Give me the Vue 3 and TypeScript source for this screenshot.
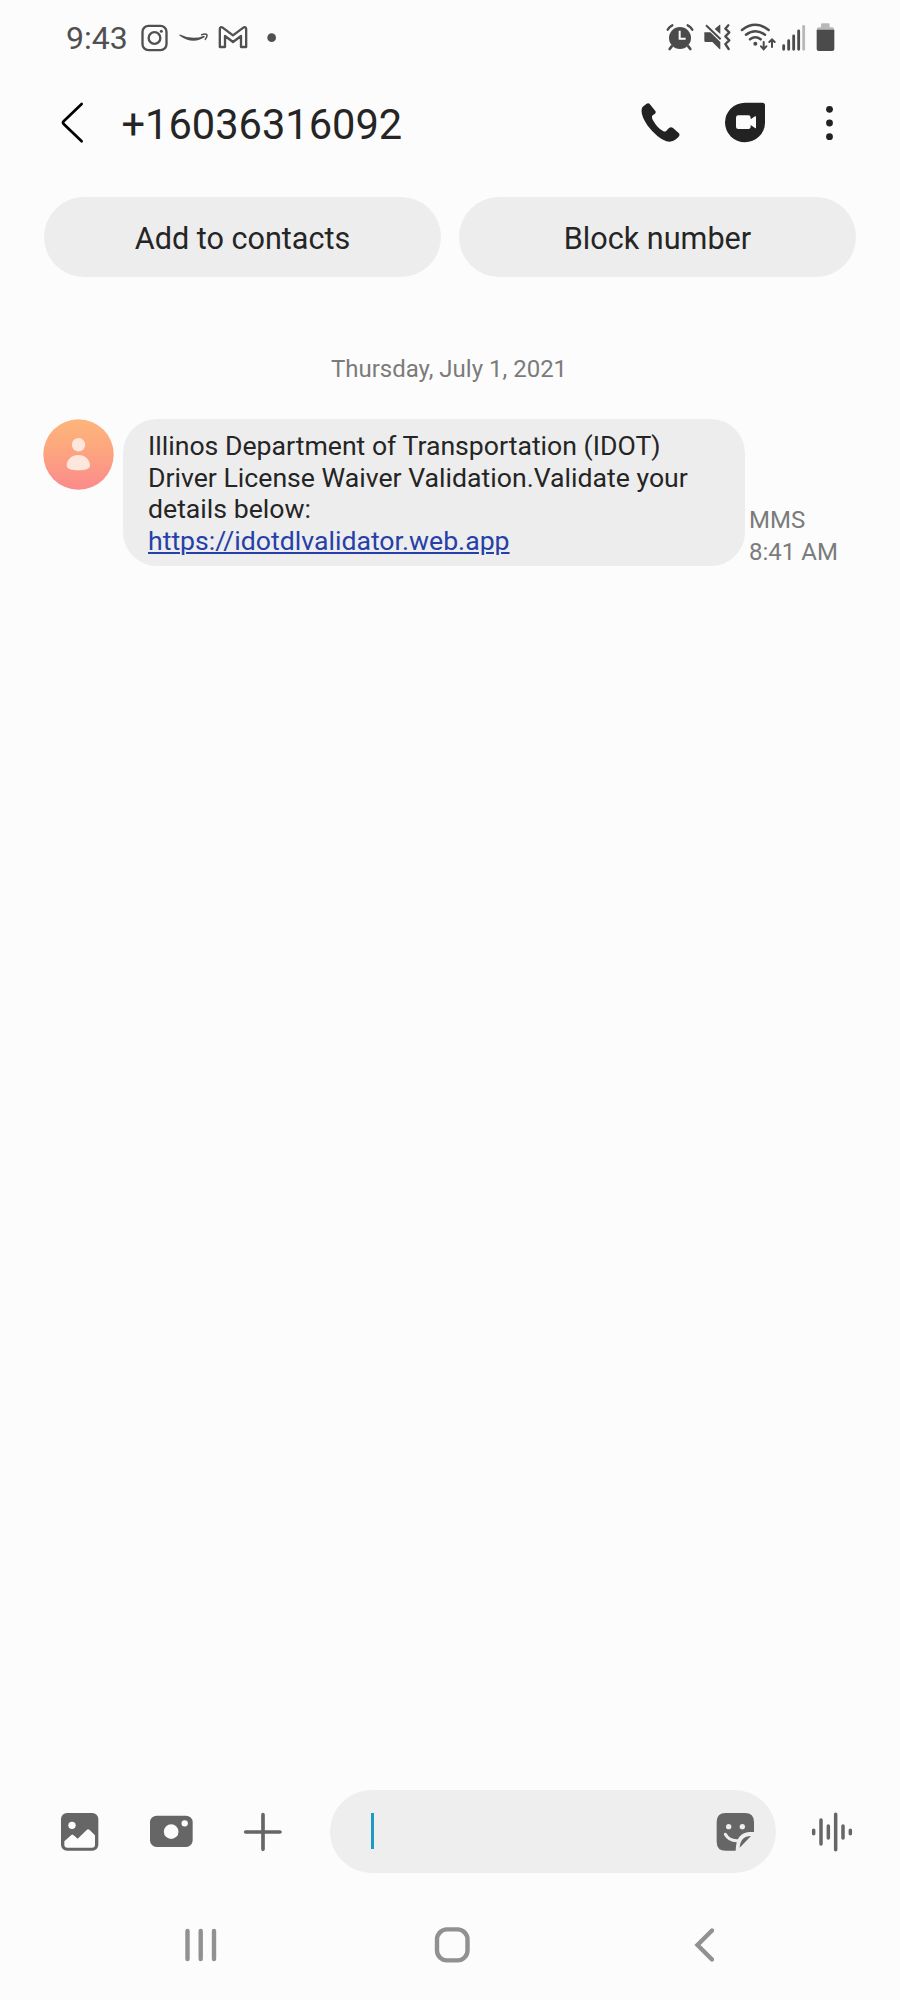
<script setup lang="ts">
import { ref } from 'vue'

const sender = ref('+16036316092')
const actions: string[] = ['Add to contacts', 'Block number']
const lines: string[] = [
  'Illinos Department of Transportation (IDOT)',
  'Driver License Waiver Validation.Validate your',
  'details below:',
]
const link = 'https://idotdlvalidator.web.app'
</script>

<template>
  <div class="phone">
    <div class="status">
      <span class="clock">9:43</span>
      <svg class="s-insta" width="30" height="30" viewBox="270 39 90 90" fill="none" stroke="#505050">
        <rect x="277.500" y="47.500" width="72" height="73" rx="18" stroke-width="7" />
        <circle cx="313.500" cy="84" r="17.500" stroke-width="7" />
        <circle cx="334" cy="63.500" r="4.500" fill="#505050" stroke="none" />
      </svg>
      <svg class="s-smile" width="32" height="30" viewBox="384 39 96 90">
        <path d="M388 73Q426 92 462 77L465 81Q428 105 389 77Z" fill="#505050" />
        <path d="M455 74Q468 70 471 75Q472 81 466 88" fill="none" stroke="#505050" stroke-width="4.500" stroke-linecap="round" />
      </svg>
      <svg class="s-mail" width="32" height="30" viewBox="501 39 96 90" fill="none" stroke="#505050" stroke-width="7" stroke-linejoin="round">
        <path d="M509.500 111V57Q510 49 518 53L549 76L580 53Q588 49 588.500 57V111H573V78L549 96L525 78V111Z" />
      </svg>
      <svg class="s-dot" width="13" height="30" viewBox="645 39 39 90"><circle cx="665" cy="83" r="13" fill="#505050" /></svg>
      <span class="fill" />
      <svg width="30" height="30" viewBox="45 39 90 90">
        <circle cx="90" cy="84" r="33" fill="#4b4b4b" />
        <path d="M65 109L59 117M115 109L121 117" stroke="#4b4b4b" stroke-width="8" stroke-linecap="round" />
        <path d="M53 59Q58 50 67 46M127 59Q122 50 113 46" fill="none" stroke="#4b4b4b" stroke-width="7" stroke-linecap="round" />
        <path d="M89 62V86H107" fill="none" stroke="#fcfcfc" stroke-width="6" />
      </svg>
      <svg class="s-mute" width="30" height="30" viewBox="159 39 90 90">
        <path d="M163 67H181L211 96V118H209L187 96H167Q163 96 163 92ZM194 57L209 44H211V72Z" fill="#4b4b4b" />
        <path d="M168 46L212 88" stroke="#4b4b4b" stroke-width="6" />
        <path d="M235 46L226 56L238 67L226 79L238 91L226 102L236 117" fill="none" stroke="#4b4b4b" stroke-width="7" stroke-linejoin="round" stroke-linecap="round" />
      </svg>
      <svg class="s-wifi" width="37" height="30" viewBox="270 39 111 90">
        <g fill="none" stroke="#4b4b4b" stroke-width="7.500" stroke-linecap="round">
          <path d="M276 60Q316 29 356 60M288 74Q316 53 345 74M300 88Q316 75 332 88" />
          <path d="M341 96V117M333 109L341 118L349 109M366 111V89M358 96L366 88L374 96" stroke-width="6" />
        </g>
        <circle cx="316" cy="101" r="6" fill="#4b4b4b" />
      </svg>
      <svg class="s-signal" width="26" height="30" viewBox="393 39 78 90" fill="none" stroke="#4b4b4b" stroke-width="8.500" stroke-linecap="round">
        <path d="M401 107V118M416 92V118M431 78V118M446 63V118" />
        <path d="M461 49V118" stroke="#b8b8b8" />
      </svg>
      <svg class="s-battery" width="21" height="30" viewBox="495 39 63 90">
        <path d="M501 62V57Q501 52 506 52H513V44Q513 40 517 40H535Q539 40 539 44V52H547Q552 52 552 57V62Z" fill="#b8b8b8" />
        <path d="M500 59H553V117Q553 123 547 123H506Q500 123 500 117Z" fill="#4b4b4b" />
      </svg>
    </div>

    <header class="bar">
      <svg class="back" width="25" height="46" viewBox="60 60 75 138" fill="none" stroke="#000" stroke-width="8" stroke-linecap="round" stroke-linejoin="round">
        <path d="M125 72L71 124Q67 128 71 132L125 184" />
      </svg>
      <h1>{{ sender }}</h1>
      <span class="fill" />
      <svg width="42" height="46" viewBox="60 60 126 138">
        <path d="M72 77L80 71Q86 68 91 74L106 93Q109 98 104 102L98 106Q94 110 98 119Q112 144 129 153Q135 157 139 152L147 144Q153 140 159 144L176 159Q181 164 176 170L168 178Q156 188 139 184Q111 173 83 137Q58 101 67 82Q69 79 72 77Z" fill="#222" />
      </svg>
      <svg class="duo" width="42" height="46" viewBox="312 60 126 138">
        <path d="M375 68H427Q435 68 435 76V128A60 59.500 0 1 1 375 68Z" fill="#222" />
        <path d="M355 106H385Q392 106 392 113V118L405 109Q408 108 408 111V143Q408 146 405 144L392 135V141Q392 147 385 147H355Q348 147 348 141V113Q348 106 355 106Z" fill="#fcfcfc" />
      </svg>
      <svg class="more" width="11" height="46" viewBox="612 60 33 138" fill="#222">
        <circle cx="628.500" cy="88" r="10.200" /><circle cx="628.500" cy="129" r="10.200" /><circle cx="628.500" cy="170" r="10.200" />
      </svg>
    </header>

    <div class="actions">
      <button v-for="a in actions" :key="a" type="button">{{ a }}</button>
    </div>

    <main>
      <p class="date">Thursday, July 1, 2021</p>
      <div class="message">
        <svg class="avatar" width="71" height="71" viewBox="0 0 71 71">
          <defs>
            <linearGradient id="avatar-fill" x1="0" y1="0" x2="0" y2="1">
              <stop offset="0" stop-color="#fdb57a" /><stop offset="0.400" stop-color="#fda77e" /><stop offset="1" stop-color="#fb8a8c" />
            </linearGradient>
          </defs>
          <circle cx="35.500" cy="35.500" r="35.200" fill="url(#avatar-fill)" />
          <circle cx="35.500" cy="25.700" r="6.700" fill="#fde7dd" />
          <path d="M35.300 36C42 36 47 41 47 46.500C47 50 42 51.300 35.300 51.300S23.700 50 23.700 46.500C23.700 41 28.500 36 35.300 36Z" fill="#fde7dd" />
        </svg>
        <div class="bubble">
          <div v-for="l in lines" :key="l" class="line">{{ l }}</div>
          <a class="line">{{ link }}</a>
        </div>
        <div class="meta">MMS<br>8:41 AM</div>
      </div>
    </main>

    <footer class="compose">
      <svg width="40" height="83" viewBox="60 30 120 249">
        <rect x="63" y="99" width="112" height="113" rx="18" fill="#666" />
        <circle cx="96" cy="136" r="11" fill="#fcfcfc" />
        <path d="M73 184L94 165Q97 162 101 166L113 176L140 150Q144 146 149 150L165 166V194Q165 203 156 203H82Q73 203 73 194Z" fill="#fcfcfc" />
      </svg>
      <svg class="camera" width="45" height="83" viewBox="327 30 135 249">
        <rect x="330" y="107" width="128" height="94" rx="20" fill="#666" />
        <circle cx="393.500" cy="155" r="22" fill="#fcfcfc" /><circle cx="434" cy="130" r="9.500" fill="#fcfcfc" />
      </svg>
      <svg class="plus" width="40" height="83" viewBox="609 30 120 249" stroke="#666" stroke-width="11" stroke-linecap="round">
        <path d="M617 156H720M669 104V208" />
      </svg>
      <div class="input">
        <span class="caret" />
        <svg width="39" height="83" viewBox="228 30 117 249">
          <path d="M257 99H315Q342 99 342 126V156H328Q288 158 287 212H257Q230 212 230 185V126Q230 99 257 99Z" fill="#666" />
          <path d="M299 203Q301 169 333 168Z" fill="#666" />
          <circle cx="266" cy="140" r="8" fill="#eee" /><circle cx="307" cy="140" r="8" fill="#eee" />
          <path d="M256 163Q267 183 292 182" fill="none" stroke="#eee" stroke-width="9" stroke-linecap="round" />
        </svg>
      </div>
      <svg class="voice" width="42" height="83" viewBox="513 30 126 249" stroke="#666" stroke-width="10.500" stroke-linecap="round">
        <path d="M521 151V161M543 120V192M565 138V174M587 103V209M609 138V174M631 151V161" />
      </svg>
    </footer>

    <nav>
      <svg width="34" height="42" viewBox="0 0 34 42" stroke="#919191" stroke-width="4.400" stroke-linecap="round"><path d="M3.500 7V35M16.700 7V35M30 7V35" /></svg>
      <svg class="home" width="36" height="42" viewBox="0 0 36 42" fill="none" stroke="#919191" stroke-width="4.400"><rect x="3" y="5.400" width="30.500" height="31" rx="10" /></svg>
      <svg class="nav-back" width="22" height="42" viewBox="0 0 22 42" fill="none" stroke="#919191" stroke-width="4.400" stroke-linecap="round"><path d="M20 6.500L5.500 21L20 35.500" /></svg>
    </nav>
  </div>
</template>

<style>
body { background: #fcfcfc; }
</style>

<style scoped>
.phone { width: 900px; height: 2000px; overflow: hidden; display: flex; flex-direction: column; background: #fcfcfc; color: #252525; font-family: Roboto, "Liberation Sans", sans-serif; }
svg { display: block; flex: none; }
.fill { flex: 1; }
.status { height: 76px; box-sizing: border-box; padding: 0 64px 0 66px; display: flex; align-items: center; }
.clock { width: 74px; font-size: 32px; line-height: 38px; color: #505050; }
.s-smile { margin-left: 8px; }
.s-mail { margin-left: 7px; }
.s-dot { margin-left: 16px; }
.s-mute { margin-left: 8px; }
.s-wifi { margin-left: 7px; }
.s-signal { margin-left: 4px; }
.s-battery { margin-left: 8px; }
.bar { height: 94px; box-sizing: border-box; padding: 0 65px 0 60px; display: flex; align-items: center; }
h1 { margin: 4px 0 0 36.500px; font-size: 41.600px; line-height: 50px; font-weight: 400; }
.duo { margin-left: 42px; }
.more { margin-left: 58px; }
.actions { margin: 27px 44px 0; display: flex; gap: 18px; }
button { flex: 1; height: 80px; padding: 4px 0 0; border: 0; border-radius: 40px; background: #ededed; color: #252525; font: 400 30.600px/36px Roboto, "Liberation Sans", sans-serif; }
main { flex: 1; }
.date { margin: 76px 0 0; padding-right: 2px; font-size: 24px; line-height: 32px; text-align: center; color: #7b7b7b; }
.message { margin: 34px 0 0 43px; display: flex; align-items: flex-start; }
.bubble { width: 622px; height: 147px; margin-left: 9px; padding: 12px 0 0 25px; box-sizing: border-box; border-radius: 34px; background: #ededed; white-space: nowrap; }
.line { display: block; font-size: 26.650px; line-height: 31.700px; }
a.line { color: #263fa9; text-decoration: underline; text-decoration-thickness: 2px; text-underline-offset: 2px; }
.meta { margin: 85px 0 0 4px; font-size: 24px; line-height: 32.300px; color: #7b7b7b; white-space: nowrap; }
.compose { height: 83px; padding: 0 47px 0 60px; display: flex; align-items: center; }
.camera { margin-left: 49px; }
.plus { margin-left: 49px; }
.input { width: 446px; height: 83px; margin-left: 47px; padding: 0 21px 0 40.500px; box-sizing: border-box; border-radius: 42px; background: #eee; display: flex; align-items: center; justify-content: space-between; }
.caret { width: 3px; height: 36px; margin-bottom: 1px; background: #1c9bc4; }
.voice { margin-left: 35px; }
nav { height: 112px; box-sizing: border-box; margin-bottom: 15px; padding: 32px 184px 0; display: flex; align-items: center; }
.home { margin-left: 216px; }
.nav-back { margin-left: 222px; }
</style>
